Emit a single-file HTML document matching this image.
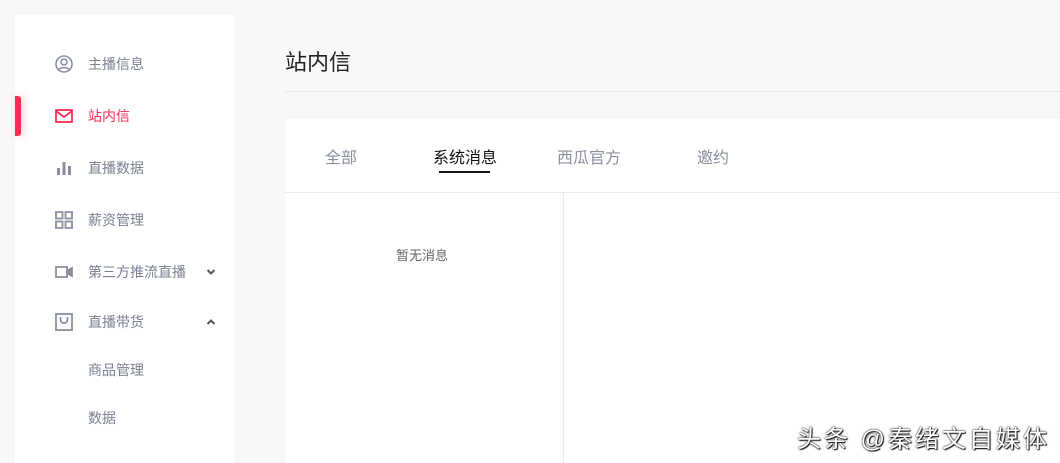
<!DOCTYPE html>
<html><head><meta charset="utf-8"><style>
*{margin:0;padding:0;box-sizing:border-box}
html,body{width:1060px;height:463px;overflow:hidden}
body{background:#f8f8f9;font-family:"Liberation Sans","Noto Sans CJK SC",sans-serif;position:relative}
.side{position:absolute;left:15px;top:15px;width:219px;height:448px;background:#fff}
.item{position:absolute;left:0;width:219px;height:40px;font-size:14px;color:#7a8091;line-height:40px}
.item .ic{position:absolute;left:40px;top:11px;width:18px;height:18px}
.item .t{position:absolute;left:73px;top:0}
.act{color:#fe2c55}
.bar{position:absolute;left:0;top:81px;width:6px;height:40px;background:#fe2c55;border-radius:0 3px 3px 0;box-shadow:2px 0 8px rgba(254,44,85,.3)}
.chev{position:absolute;left:191px;top:16px;width:10px;height:8px}
.title{position:absolute;left:285px;top:45px;font-size:22px;color:#222}
.hr{position:absolute;left:285px;top:91px;width:775px;height:1px;background:#e8e8ec}
.card{position:absolute;left:285px;top:119px;width:775px;height:344px;background:#fff}
.tab{position:absolute;top:25px;font-size:16px;color:#8a8f9c}
.ul{position:absolute;left:154px;top:52px;width:51px;height:2px;background:#111}
.line{position:absolute;left:0;top:73px;width:775px;height:1px;background:#e8ebf0}
.vl{position:absolute;left:278px;top:73px;width:1px;height:280px;background:#e8ebf0}
.empty{position:absolute;left:111px;top:126px;font-size:13px;color:#666}
.wm{position:absolute;left:797px;top:419px;font-size:24px;letter-spacing:3px;color:#fff;text-shadow:0 0 2px #333,0 0 1px #000,1px 1px 1px #000}
</style></head><body>
<div class="side">
<div class="item" style="top:29px"><svg class="ic" viewBox="0 0 18 18" fill="none" stroke="#8a90a0" stroke-width="1.6"><circle cx="9" cy="9" r="8"/><circle cx="9" cy="7" r="3"/><path d="M4 14.5c1.5-2.5 8.5-2.5 10 0"/></svg><span class="t">主播信息</span></div>
<div class="bar"></div>
<div class="item act" style="top:81px"><svg class="ic" viewBox="0 0 18 18" fill="none" stroke="#fe2c55" stroke-width="1.8"><rect x="1" y="3" width="16" height="12"/><path d="M1 4l8 6 8-6"/></svg><span class="t">站内信</span></div>
<div class="item" style="top:133px"><svg class="ic" viewBox="0 0 18 18" fill="#8a90a0"><rect x="2" y="9" width="3" height="7"/><rect x="7.5" y="3" width="3" height="13"/><rect x="13" y="7" width="3" height="9"/></svg><span class="t">直播数据</span></div>
<div class="item" style="top:185px"><svg class="ic" viewBox="0 0 18 18" fill="none" stroke="#8a90a0" stroke-width="1.8"><rect x="1" y="1" width="6.5" height="6.5"/><rect x="10.5" y="1" width="6.5" height="6.5"/><rect x="1" y="10.5" width="6.5" height="6.5"/><rect x="10.5" y="10.5" width="6.5" height="6.5"/></svg><span class="t">薪资管理</span></div>
<div class="item" style="top:237px"><svg class="ic" viewBox="0 0 18 18" fill="none" stroke="#8a90a0" stroke-width="1.8"><rect x="1" y="4" width="11" height="10"/><path d="M12 8l5-3v8l-5-3z" fill="#8a90a0"/></svg><span class="t">第三方推流直播</span><svg class="chev" viewBox="0 0 10 8" fill="none" stroke="#555" stroke-width="2"><path d="M1.5 2l3.5 3.5L8.5 2"/></svg></div>
<div class="item" style="top:287px"><svg class="ic" viewBox="0 0 18 18" fill="none" stroke="#8a90a0" stroke-width="1.8"><rect x="1" y="1" width="16" height="16"/><path d="M5.5 4v2.5a3.5 3.5 0 0 0 7 0V4"/></svg><span class="t">直播带货</span><svg class="chev" viewBox="0 0 10 8" fill="none" stroke="#555" stroke-width="2"><path d="M1.5 6L5 2.5 8.5 6"/></svg></div>
<div class="item" style="top:335px"><span class="t">商品管理</span></div>
<div class="item" style="top:383px"><span class="t">数据</span></div>
</div>
<div class="title">站内信</div>
<div class="hr"></div>
<div class="card">
<div class="tab" style="left:40px">全部</div>
<div class="tab" style="left:148px;color:#111">系统消息</div>
<div class="tab" style="left:272px">西瓜官方</div>
<div class="tab" style="left:412px">邀约</div>
<div class="ul"></div>
<div class="line"></div>
<div class="vl"></div>
<div class="empty">暂无消息</div>
</div>
<div class="wm">头条 @秦绪文自媒体</div>
</body></html>
